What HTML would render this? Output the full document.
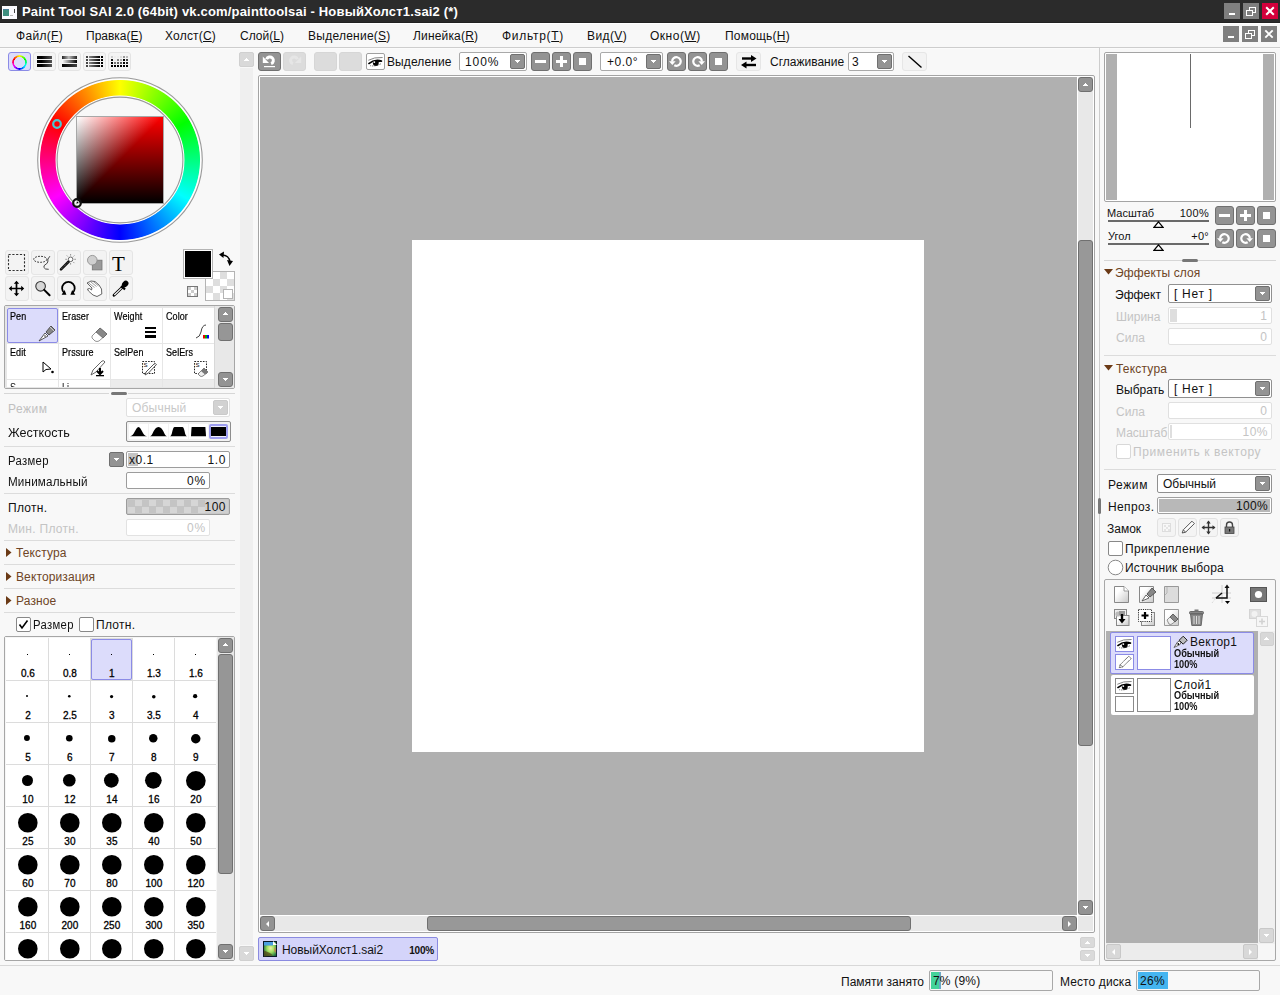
<!DOCTYPE html>
<html><head><meta charset="utf-8">
<style>
*{margin:0;padding:0;box-sizing:border-box}
html,body{width:1280px;height:995px;overflow:hidden;background:#f8f8f8;font-family:"Liberation Sans",sans-serif;color:#000;position:relative}
.a{position:absolute}
.t{position:absolute;white-space:nowrap;line-height:1}
</style></head><body>
<div class="a" style="left:0px;top:0px;width:1280px;height:23px;background:#2b2b2b;"></div>
<div class="a" style="left:0px;top:22px;width:1280px;height:1px;background:#222;"></div>
<div class="a" style="left:0px;top:23px;width:1280px;height:1px;background:#fff;"></div>
<div class="a" style="left:2px;top:6px;width:15px;height:13px;background:#fbfbff;"></div>
<div class="a" style="left:3px;top:9px;width:6px;height:7px;background:#3f8f7f;"></div>
<div class="a" style="left:3px;top:9px;width:6px;height:1px;background:#4a7f9a;"></div>
<div class="a" style="left:14px;top:9px;width:1px;height:4px;background:#444;"></div>
<div class="a" style="left:10px;top:15px;width:3px;height:1px;background:#bbb;"></div>
<div class="t" style="left:22px;top:5px;font-size:13px;color:#fff;font-weight:bold;letter-spacing:0.18px;">Paint Tool SAI 2.0 (64bit) vk.com/painttoolsai - НовыйХолст1.sai2 (*)</div>
<div class="a" style="left:1224px;top:3px;width:16px;height:16px;background:#7f7f7f;"></div>
<div class="a" style="left:1243px;top:3px;width:16px;height:16px;background:#7f7f7f;"></div>
<div class="a" style="left:1262px;top:3px;width:16px;height:16px;background:#d3003c;"></div>
<div class="a" style="left:1229px;top:13px;width:6px;height:2px;background:#fff;"></div>
<svg class="a" style="left:1246px;top:7px;" width="10" height="10" viewBox="0 0 10 10"><rect x="3.5" y="0.5" width="6" height="5" fill="none" stroke="#fff"/><rect x="0.5" y="3.5" width="6" height="5" fill="#7f7f7f" stroke="#fff"/></svg>
<svg class="a" style="left:1265px;top:6px;" width="10" height="10" viewBox="0 0 10 10"><path d="M1.2 1.2 L8.8 8.8 M8.8 1.2 L1.2 8.8" stroke="#fff" stroke-width="2"/></svg>
<div class="t" style="left:16px;top:30px;font-size:12px;color:#111;letter-spacing:0.3px;text-underline-offset:1px">Файл(<u>F</u>)</div>
<div class="t" style="left:86px;top:30px;font-size:12px;color:#111;letter-spacing:0px;text-underline-offset:1px">Правка(<u>E</u>)</div>
<div class="t" style="left:165px;top:30px;font-size:12px;color:#111;letter-spacing:0.2px;text-underline-offset:1px">Холст(<u>C</u>)</div>
<div class="t" style="left:240px;top:30px;font-size:12px;color:#111;letter-spacing:0px;text-underline-offset:1px">Слой(<u>L</u>)</div>
<div class="t" style="left:308px;top:30px;font-size:12px;color:#111;letter-spacing:0.25px;text-underline-offset:1px">Выделение(<u>S</u>)</div>
<div class="t" style="left:413px;top:30px;font-size:12px;color:#111;letter-spacing:0.17px;text-underline-offset:1px">Линейка(<u>R</u>)</div>
<div class="t" style="left:502px;top:30px;font-size:12px;color:#111;letter-spacing:0.7px;text-underline-offset:1px">Фильтр(<u>T</u>)</div>
<div class="t" style="left:587px;top:30px;font-size:12px;color:#111;letter-spacing:0.4px;text-underline-offset:1px">Вид(<u>V</u>)</div>
<div class="t" style="left:650px;top:30px;font-size:12px;color:#111;letter-spacing:0.5px;text-underline-offset:1px">Окно(<u>W</u>)</div>
<div class="t" style="left:725px;top:30px;font-size:12px;color:#111;letter-spacing:0.2px;text-underline-offset:1px">Помощь(<u>H</u>)</div>
<div class="a" style="left:1223px;top:26px;width:16px;height:16px;background:#7f7f7f;"></div>
<div class="a" style="left:1242px;top:26px;width:16px;height:16px;background:#7f7f7f;"></div>
<div class="a" style="left:1261px;top:26px;width:16px;height:16px;background:#7f7f7f;"></div>
<div class="a" style="left:1228px;top:36px;width:6px;height:2px;background:#fff;"></div>
<svg class="a" style="left:1245px;top:30px;" width="10" height="10" viewBox="0 0 10 10"><rect x="3.5" y="0.5" width="6" height="5" fill="none" stroke="#fff"/><rect x="0.5" y="3.5" width="6" height="5" fill="#7f7f7f" stroke="#fff"/></svg>
<svg class="a" style="left:1264px;top:29px;" width="10" height="10" viewBox="0 0 10 10"><path d="M1.3 1.3 L8.7 8.7 M8.7 1.3 L1.3 8.7" stroke="#fff" stroke-width="1.9"/></svg>
<div class="a" style="left:0px;top:47px;width:1280px;height:1px;background:#cdcdcd;"></div>
<div class="a" style="left:0px;top:48px;width:1280px;height:1px;background:#fbfbfb;"></div>
<div class="a" style="left:239px;top:52px;width:15px;height:15px;background:#d9d9d9;border:1px solid #d0d0d0;border-radius:2px;"></div>
<div class="a" style="left:246px;top:58px;width:1px;height:1px;background:#fff;"></div>
<div class="a" style="left:245px;top:59px;width:3px;height:1px;background:#fff;"></div>
<div class="a" style="left:244px;top:60px;width:5px;height:1px;background:#fff;"></div>
<div class="a" style="left:258px;top:52px;width:23px;height:19px;background:#939393;border:1px solid #707070;border-radius:3px;"></div>
<svg class="a" style="left:258px;top:52px;" width="23" height="19" viewBox="0 0 23 19"><path d="M4.8 4.6 V11 H11 Z" fill="#fff"/><path d="M8.6 7.2 A3.5 3.5 0 1 1 13.1 11.7" stroke="#fff" stroke-width="3" fill="none"/><rect x="6" y="14" width="11" height="1.2" fill="#fff"/></svg>
<div class="a" style="left:283px;top:52px;width:23px;height:19px;background:#dcdcdc;border:1px solid #d6d6d6;border-radius:3px;"></div>
<svg class="a" style="left:283px;top:52px;" width="23" height="19" viewBox="0 0 23 19"><g transform="translate(23 0) scale(-1 1)"><path d="M4.8 4.6 V11 H11 Z" fill="#e6e6e6"/><path d="M8.6 7.2 A3.5 3.5 0 1 1 13.1 11.7" stroke="#e6e6e6" stroke-width="3" fill="none"/></g></svg>
<div class="a" style="left:314px;top:52px;width:23px;height:19px;background:#dcdcdc;border:1px solid #d6d6d6;border-radius:3px;"></div>
<div class="a" style="left:339px;top:52px;width:23px;height:19px;background:#dcdcdc;border:1px solid #d6d6d6;border-radius:3px;"></div>
<div class="a" style="left:366px;top:53px;width:19px;height:17px;background:#fff;border:1px solid #a0a0a0;border-radius:2px;"></div>
<svg class="a" style="left:367px;top:56px;" width="18" height="13" viewBox="0 0 18 13"><g transform="translate(1 1)"><path d="M0.3 3.3 Q6 0 14.6 0.5" stroke="#777" stroke-width="0.9" fill="none"/><path d="M0.4 6.8 Q7 1.6 14 4.3" stroke="#000" stroke-width="1.7" fill="none"/><path d="M9 3.2 L14.8 4.3 L9.5 5.4 Z" fill="#000"/><circle cx="7.8" cy="6" r="2.9" fill="#000"/><circle cx="6.3" cy="5.1" r="0.95" fill="#fff"/><path d="M2.3 8.7 Q8 9.7 13.3 6.5" stroke="#444" stroke-width="1" stroke-dasharray="0.8,0.9" fill="none"/></g></svg>
<div class="t" style="left:387px;top:56px;font-size:12px;color:#111;letter-spacing:0.1px;">Выделение</div>
<div class="a" style="left:459px;top:52px;width:68px;height:19px;background:#fff;border:1px solid #a9a9a9;border-radius:2px;"></div>
<div class="t" style="left:465px;top:56px;font-size:12px;color:#111;letter-spacing:0.9px;">100%</div>
<div class="a" style="left:510px;top:54px;width:15px;height:15px;background:#939393;border:1px solid #707070;border-radius:2px;"></div>
<div class="a" style="left:515px;top:60px;width:5px;height:1px;background:#fff;"></div>
<div class="a" style="left:516px;top:61px;width:3px;height:1px;background:#fff;"></div>
<div class="a" style="left:517px;top:62px;width:1px;height:1px;background:#fff;"></div>
<div class="a" style="left:531px;top:52px;width:19px;height:19px;background:#939393;border:1px solid #707070;border-radius:3px;"></div>
<div class="a" style="left:552px;top:52px;width:19px;height:19px;background:#939393;border:1px solid #707070;border-radius:3px;"></div>
<div class="a" style="left:573px;top:52px;width:19px;height:19px;background:#939393;border:1px solid #707070;border-radius:3px;"></div>
<div class="a" style="left:535px;top:60px;width:11px;height:3px;background:#fff;"></div>
<div class="a" style="left:556px;top:60px;width:11px;height:3px;background:#fff;"></div>
<div class="a" style="left:560px;top:56px;width:3px;height:11px;background:#fff;"></div>
<div class="a" style="left:579px;top:58px;width:7px;height:7px;background:#fff;"></div>
<div class="a" style="left:600px;top:52px;width:63px;height:19px;background:#fff;border:1px solid #a9a9a9;border-radius:2px;"></div>
<div class="t" style="left:607px;top:56px;font-size:12px;color:#111;letter-spacing:0.5px;">+0.0°</div>
<div class="a" style="left:646px;top:54px;width:15px;height:15px;background:#939393;border:1px solid #707070;border-radius:2px;"></div>
<div class="a" style="left:651px;top:60px;width:5px;height:1px;background:#fff;"></div>
<div class="a" style="left:652px;top:61px;width:3px;height:1px;background:#fff;"></div>
<div class="a" style="left:653px;top:62px;width:1px;height:1px;background:#fff;"></div>
<div class="a" style="left:667px;top:52px;width:19px;height:19px;background:#939393;border:1px solid #707070;border-radius:3px;"></div>
<div class="a" style="left:688px;top:52px;width:19px;height:19px;background:#939393;border:1px solid #707070;border-radius:3px;"></div>
<div class="a" style="left:709px;top:52px;width:19px;height:19px;background:#939393;border:1px solid #707070;border-radius:3px;"></div>
<svg class="a" style="left:667px;top:52px;" width="19" height="19" viewBox="0 0 19 19"><path d="M5.15 9.45 A4.3 4.3 0 1 1 7.3 13.2" stroke="#fff" stroke-width="2.2" fill="none"/><path d="M2 9.2 L8.6 9.2 L5.3 13 Z" fill="#fff"/></svg>
<svg class="a" style="left:688px;top:52px;" width="19" height="19" viewBox="0 0 19 19"><g transform="translate(19 0) scale(-1 1)"><path d="M5.15 9.45 A4.3 4.3 0 1 1 7.3 13.2" stroke="#fff" stroke-width="2.2" fill="none"/><path d="M2 9.2 L8.6 9.2 L5.3 13 Z" fill="#fff"/></g></svg>
<div class="a" style="left:715px;top:58px;width:7px;height:7px;background:#fff;"></div>
<div class="a" style="left:736px;top:52px;width:25px;height:19px;background:#f3f3f3;border:1px solid #e6e6e6;border-radius:3px;"></div>
<svg class="a" style="left:740px;top:55px;" width="18" height="14" viewBox="0 0 18 14"><path d="M2 3.5 H13" stroke="#000" stroke-width="2.4"/><path d="M11 0 L16.5 3.5 L11 7 Z" fill="#000"/><path d="M5 10 H16" stroke="#000" stroke-width="2.4"/><path d="M6.5 6.5 L1 10 L6.5 13.5 Z" fill="#000"/></svg>
<div class="t" style="left:770px;top:56px;font-size:12px;color:#111;">Сглаживание</div>
<div class="a" style="left:848px;top:52px;width:46px;height:19px;background:#fff;border:1px solid #a9a9a9;border-radius:2px;"></div>
<div class="t" style="left:852px;top:56px;font-size:12px;color:#111;">3</div>
<div class="a" style="left:877px;top:54px;width:15px;height:15px;background:#939393;border:1px solid #707070;border-radius:2px;"></div>
<div class="a" style="left:882px;top:60px;width:5px;height:1px;background:#fff;"></div>
<div class="a" style="left:883px;top:61px;width:3px;height:1px;background:#fff;"></div>
<div class="a" style="left:884px;top:62px;width:1px;height:1px;background:#fff;"></div>
<div class="a" style="left:902px;top:52px;width:25px;height:19px;background:#f3f3f3;border:1px solid #e6e6e6;border-radius:3px;"></div>
<svg class="a" style="left:906px;top:54px;" width="17" height="15" viewBox="0 0 17 15"><path d="M2.5 2 L15.5 13.5" stroke="#000" stroke-width="1.4"/></svg>
<div class="a" style="left:8px;top:52px;width:23px;height:19px;background:#dcdcfb;border:1px solid #8b8be6;border-radius:3px;"></div>
<svg class="a" style="left:12px;top:54px;" width="15" height="15" viewBox="0 0 15 15"><defs><linearGradient id="rg" x1="0" y1="0" x2="1" y2="1"><stop offset="0" stop-color="#f44"/><stop offset="0.5" stop-color="#ee0"/><stop offset="1" stop-color="#44f"/></linearGradient></defs></svg>
<div class="a" style="left:12px;top:55px;width:15px;height:15px;border-radius:50%;background:conic-gradient(#ff0,#0f0,#0ff,#00f,#f0f,#f00,#ff0);-webkit-mask:radial-gradient(circle closest-side, transparent 5.3px, #000 5.8px, #000 7.5px, transparent 8px)"></div>
<div class="a" style="left:33px;top:52px;width:23px;height:19px;background:#f4f4f4;border:1px solid #e4e4e4;border-radius:3px;"></div>
<div class="a" style="left:58px;top:52px;width:23px;height:19px;background:#f4f4f4;border:1px solid #e4e4e4;border-radius:3px;"></div>
<div class="a" style="left:83px;top:52px;width:23px;height:19px;background:#f4f4f4;border:1px solid #e4e4e4;border-radius:3px;"></div>
<div class="a" style="left:108px;top:52px;width:23px;height:19px;background:#f4f4f4;border:1px solid #e4e4e4;border-radius:3px;"></div>
<div class="a" style="left:37px;top:56px;width:15px;height:3px;background:linear-gradient(to right,#000 30%,#555)"></div>
<div class="a" style="left:37px;top:60px;width:15px;height:3px;background:linear-gradient(to right,#000 30%,#555)"></div>
<div class="a" style="left:37px;top:64px;width:15px;height:3px;background:linear-gradient(to right,#000 30%,#555)"></div>
<div class="a" style="left:62px;top:56px;width:15px;height:3px;background:linear-gradient(to right,#222,#bbb 45%,#222)"></div>
<div class="a" style="left:62px;top:60px;width:15px;height:3px;background:linear-gradient(to right,#fff,#000)"></div>
<div class="a" style="left:62px;top:64px;width:15px;height:3px;background:linear-gradient(to right,#000,#444)"></div>
<div class="a" style="left:86px;top:56px;width:2px;height:2px;background:#444;"></div>
<div class="a" style="left:89px;top:56px;width:11px;height:2px;background:linear-gradient(to right,#888,#000)"></div>
<div class="a" style="left:101px;top:56px;width:2px;height:2px;background:#000;"></div>
<div class="a" style="left:86px;top:59px;width:2px;height:2px;background:#444;"></div>
<div class="a" style="left:89px;top:59px;width:11px;height:2px;background:linear-gradient(to right,#888,#000)"></div>
<div class="a" style="left:101px;top:59px;width:2px;height:2px;background:#000;"></div>
<div class="a" style="left:86px;top:62px;width:2px;height:2px;background:#444;"></div>
<div class="a" style="left:89px;top:62px;width:11px;height:2px;background:linear-gradient(to right,#888,#000)"></div>
<div class="a" style="left:101px;top:62px;width:2px;height:2px;background:#000;"></div>
<div class="a" style="left:86px;top:65px;width:2px;height:2px;background:#444;"></div>
<div class="a" style="left:89px;top:65px;width:11px;height:2px;background:linear-gradient(to right,#888,#000)"></div>
<div class="a" style="left:101px;top:65px;width:2px;height:2px;background:#000;"></div>
<div class="a" style="left:111px;top:56px;width:2px;height:2px;background:#cccccc;"></div>
<div class="a" style="left:114px;top:56px;width:2px;height:2px;background:#eeeeee;"></div>
<div class="a" style="left:117px;top:56px;width:2px;height:2px;background:#eeeeee;"></div>
<div class="a" style="left:120px;top:56px;width:2px;height:2px;background:#dddddd;"></div>
<div class="a" style="left:123px;top:56px;width:2px;height:2px;background:#999999;"></div>
<div class="a" style="left:126px;top:56px;width:2px;height:2px;background:#bbbbbb;"></div>
<div class="a" style="left:111px;top:59px;width:2px;height:2px;background:#111111;"></div>
<div class="a" style="left:114px;top:59px;width:2px;height:2px;background:#eeeeee;"></div>
<div class="a" style="left:117px;top:59px;width:2px;height:2px;background:#888888;"></div>
<div class="a" style="left:120px;top:59px;width:2px;height:2px;background:#aaaaaa;"></div>
<div class="a" style="left:123px;top:59px;width:2px;height:2px;background:#000000;"></div>
<div class="a" style="left:126px;top:59px;width:2px;height:2px;background:#444444;"></div>
<div class="a" style="left:111px;top:62px;width:2px;height:2px;background:#000000;"></div>
<div class="a" style="left:114px;top:62px;width:2px;height:2px;background:#777777;"></div>
<div class="a" style="left:117px;top:62px;width:2px;height:2px;background:#666666;"></div>
<div class="a" style="left:120px;top:62px;width:2px;height:2px;background:#555555;"></div>
<div class="a" style="left:123px;top:62px;width:2px;height:2px;background:#000000;"></div>
<div class="a" style="left:126px;top:62px;width:2px;height:2px;background:#222222;"></div>
<div class="a" style="left:111px;top:65px;width:2px;height:2px;background:#000000;"></div>
<div class="a" style="left:114px;top:65px;width:2px;height:2px;background:#000000;"></div>
<div class="a" style="left:117px;top:65px;width:2px;height:2px;background:#000000;"></div>
<div class="a" style="left:120px;top:65px;width:2px;height:2px;background:#000000;"></div>
<div class="a" style="left:123px;top:65px;width:2px;height:2px;background:#000000;"></div>
<div class="a" style="left:126px;top:65px;width:2px;height:2px;background:#000000;"></div>
<div class="a" style="left:38px;top:78px;width:164px;height:164px;border-radius:50%;background:conic-gradient(from 0deg, #ff0 0deg, #0f0 60deg, #0ff 120deg, #00f 180deg, #f0f 240deg, #f00 300deg, #ff0 360deg);-webkit-mask:radial-gradient(circle closest-side, transparent 63.5px, #000 64.5px, #000 79.5px, transparent 80.5px);mask:radial-gradient(circle closest-side, transparent 63.5px, #000 64.5px, #000 79.5px, transparent 80.5px)"></div>
<svg class="a" style="left:35px;top:75px;" width="170" height="170" viewBox="0 0 170 170"><circle cx="85" cy="85" r="81" fill="none" stroke="#fff" stroke-width="1.2"/><circle cx="85" cy="85" r="63.9" fill="none" stroke="#fff" stroke-width="1.1"/><circle cx="85" cy="85" r="82.3" fill="none" stroke="#9a9a9a" stroke-width="1.1"/><circle cx="85" cy="85" r="62.9" fill="none" stroke="#9a9a9a" stroke-width="1.1"/></svg>
<div class="a" style="left:76px;top:116px;width:88px;height:88px;background:#fff;border:1px solid #a8a8a8;"></div>
<div class="a" style="left:77px;top:117px;width:86px;height:86px;background:linear-gradient(to bottom right, #0ff, #000 50%), linear-gradient(to bottom, #f00, #000);background-blend-mode:screen"></div>
<svg class="a" style="left:51px;top:118px;" width="12" height="12" viewBox="0 0 12 12"><circle cx="6" cy="6" r="3.8" fill="none" stroke="#4cc8d0" stroke-width="2.2"/></svg>
<svg class="a" style="left:71px;top:197px;" width="12" height="12" viewBox="0 0 12 12"><circle cx="6" cy="6" r="3.8" fill="none" stroke="#111" stroke-width="2.2"/><circle cx="6" cy="6" r="2" fill="none" stroke="#fff" stroke-width="1"/></svg>
<div class="a" style="left:5px;top:250px;width:24px;height:25px;background:#f3f3f3;border:1px solid #e5e5e5;border-radius:3px;"></div>
<div class="a" style="left:31px;top:250px;width:24px;height:25px;background:#f3f3f3;border:1px solid #e5e5e5;border-radius:3px;"></div>
<div class="a" style="left:57px;top:250px;width:24px;height:25px;background:#f3f3f3;border:1px solid #e5e5e5;border-radius:3px;"></div>
<div class="a" style="left:83px;top:250px;width:24px;height:25px;background:#f3f3f3;border:1px solid #e5e5e5;border-radius:3px;"></div>
<div class="a" style="left:109px;top:250px;width:24px;height:25px;background:#f3f3f3;border:1px solid #e5e5e5;border-radius:3px;"></div>
<div class="a" style="left:5px;top:276px;width:24px;height:25px;background:#f3f3f3;border:1px solid #e5e5e5;border-radius:3px;"></div>
<div class="a" style="left:31px;top:276px;width:24px;height:25px;background:#f3f3f3;border:1px solid #e5e5e5;border-radius:3px;"></div>
<div class="a" style="left:57px;top:276px;width:24px;height:25px;background:#f3f3f3;border:1px solid #e5e5e5;border-radius:3px;"></div>
<div class="a" style="left:83px;top:276px;width:24px;height:25px;background:#f3f3f3;border:1px solid #e5e5e5;border-radius:3px;"></div>
<div class="a" style="left:109px;top:276px;width:24px;height:25px;background:#f3f3f3;border:1px solid #e5e5e5;border-radius:3px;"></div>
<svg class="a" style="left:5px;top:250px;" width="24" height="25" viewBox="0 0 24 25"><rect x="3.5" y="4.5" width="16" height="16" fill="none" stroke="#333" stroke-width="1.1" stroke-dasharray="2.2,1.6"/></svg>
<svg class="a" style="left:31px;top:250px;" width="24" height="25" viewBox="0 0 24 25"><ellipse cx="9.3" cy="9.3" rx="6.6" ry="3" fill="none" stroke="#333" stroke-width="1" stroke-dasharray="1.8,1.2"/><path d="M18.9 6.2 Q16 9 16.8 12 Q16 14 13.5 15.2 Q11.5 17.5 14.6 19 L17.7 19.3" fill="none" stroke="#333" stroke-width="0.9"/></svg>
<svg class="a" style="left:57px;top:250px;" width="24" height="25" viewBox="0 0 24 25"><path d="M4 19.3 L11.8 11.5" stroke="#111" stroke-width="2.6" stroke-linecap="round"/><path d="M4.5 18.8 L11.5 11.8" stroke="#aaa" stroke-width="0.7" stroke-dasharray="1,1"/><circle cx="13.6" cy="9.3" r="2.3" fill="#fff" stroke="#555" stroke-width="0.9"/><path d="M13.6 4 V5.6 M13.6 13 V14.6 M8.3 9.3 H9.9 M17.3 9.3 H18.9 M9.8 5.5 L10.8 6.5 M17.4 5.5 L16.4 6.5 M17.4 13.1 L16.4 12.1" stroke="#888" stroke-width="0.9"/></svg>
<svg class="a" style="left:83px;top:250px;" width="24" height="25" viewBox="0 0 24 25"><rect x="9.3" y="10.2" width="9.7" height="9.7" fill="#9a9a9a" stroke="#777" stroke-width="0.8"/><circle cx="9.3" cy="10.2" r="4.8" fill="#cfcfcf" stroke="#888" stroke-width="0.8"/></svg>
<div class="t" style="left:112px;top:254px;font-family:'Liberation Serif';font-size:21px;color:#000">T</div>
<svg class="a" style="left:5px;top:276px;" width="24" height="25" viewBox="0 0 24 25"><path d="M11.5 6.5 V18.5 M5.5 12.5 H17.5" stroke="#000" stroke-width="1.7"/><path d="M11.5 4.8 L8.8 7.8 H14.2 Z M11.5 20.2 L8.8 17.2 H14.2 Z M3.8 12.5 L6.8 9.8 V15.2 Z M19.2 12.5 L16.2 9.8 V15.2 Z" fill="#000"/></svg>
<svg class="a" style="left:31px;top:276px;" width="24" height="25" viewBox="0 0 24 25"><circle cx="9.6" cy="10.3" r="4.8" fill="#d6d6d6" stroke="#333" stroke-width="1.1"/><path d="M13.2 13.9 L18.6 19.3" stroke="#000" stroke-width="2" stroke-linecap="round"/></svg>
<svg class="a" style="left:57px;top:276px;" width="24" height="25" viewBox="0 0 24 25"><path d="M7.3 17 A6.3 6.3 0 1 1 15.5 17" fill="none" stroke="#000" stroke-width="1.8"/><path d="M4.6 18.8 H9.4 L7.6 14 Z M13.4 18.8 H18.2 L15.2 14 Z" fill="#000"/></svg>
<svg class="a" style="left:83px;top:276px;" width="24" height="25" viewBox="0 0 24 25"><path d="M4 7 L8 5 L12 5.5 L16 9 L18.5 13 L18.8 18 L14 20.5 L10 19 L5.5 15 L4.5 13 L6.5 12.5 L8.5 14 L9 12 Z" fill="#fff" stroke="#555" stroke-width="0.9" stroke-linejoin="round"/><path d="M5 6.5 L11.5 11.5 M7.3 5.5 L13.5 10.5 M10 5.2 L15.3 9.8" stroke="#777" stroke-width="0.7"/></svg>
<svg class="a" style="left:109px;top:276px;" width="24" height="25" viewBox="0 0 24 25"><path d="M5 19.3 L12.8 11.8" stroke="#000" stroke-width="2.8" stroke-linecap="round"/><path d="M5.3 19 L12.5 12.1" stroke="#fff" stroke-width="1.2"/><path d="M12.3 9.8 L16 13.5" stroke="#000" stroke-width="2.2"/><ellipse cx="16.2" cy="8" rx="2.8" ry="3.6" transform="rotate(45 16.2 8)" fill="#000"/></svg>
<div class="a" style="left:205px;top:271px;width:30px;height:30px;background:#fff;border:1px solid #b4b4b4;"></div>
<div class="a" style="left:206px;top:272px;width:7px;height:7px;background:#dedede;"></div>
<div class="a" style="left:220px;top:272px;width:7px;height:7px;background:#dedede;"></div>
<div class="a" style="left:213px;top:279px;width:7px;height:7px;background:#dedede;"></div>
<div class="a" style="left:227px;top:279px;width:7px;height:7px;background:#dedede;"></div>
<div class="a" style="left:206px;top:286px;width:7px;height:7px;background:#dedede;"></div>
<div class="a" style="left:220px;top:286px;width:7px;height:7px;background:#dedede;"></div>
<div class="a" style="left:213px;top:293px;width:7px;height:7px;background:#dedede;"></div>
<div class="a" style="left:227px;top:293px;width:7px;height:7px;background:#dedede;"></div>
<div class="a" style="left:223px;top:289px;width:10px;height:10px;background:#fff;border:1px solid #b4b4b4;"></div>
<div class="a" style="left:183px;top:249px;width:30px;height:30px;background:#fff;border:1px solid #b4b4b4;"></div>
<div class="a" style="left:185px;top:251px;width:26px;height:26px;background:#000;"></div>
<svg class="a" style="left:218px;top:251px;" width="16" height="16" viewBox="0 0 16 16"><path d="M4 4 Q11 4 12 11" fill="none" stroke="#000" stroke-width="1.3"/><path d="M1 3.5 L6 0.5 L5.5 7 Z" fill="#000"/><path d="M9 9 L15 10 L11.5 15 Z" fill="#000"/></svg>
<div class="a" style="left:187px;top:286px;width:11px;height:11px;background:#fff;border:1px solid #777;"></div>
<div class="a" style="left:188px;top:287px;width:3px;height:3px;background:#ccc;"></div>
<div class="a" style="left:194px;top:287px;width:3px;height:3px;background:#ccc;"></div>
<div class="a" style="left:191px;top:290px;width:3px;height:3px;background:#ccc;"></div>
<div class="a" style="left:188px;top:293px;width:3px;height:3px;background:#ccc;"></div>
<div class="a" style="left:194px;top:293px;width:3px;height:3px;background:#ccc;"></div>
<div class="a" style="left:4px;top:305px;width:231px;height:84px;background:#f0f0f0;border:1px solid #a6a6a6;border-radius:2px;"></div>
<div class="a" style="left:5px;top:306px;width:210px;height:82px;background:#e6e6e6;"></div>
<div class="a" style="left:7px;top:308px;width:51px;height:35px;background:#dcdcfb;border:1px solid #8b8be6;border-radius:2px;"></div>
<div class="t" style="left:10px;top:312px;font-size:10px;color:#000;letter-spacing:0.1px;transform:scaleX(0.9);transform-origin:0 0;-webkit-text-stroke:0.2px #000">Pen</div>
<div class="a" style="left:59px;top:308px;width:51px;height:35px;background:#fff;"></div>
<div class="t" style="left:62px;top:312px;font-size:10px;color:#000;letter-spacing:0.1px;transform:scaleX(0.9);transform-origin:0 0;-webkit-text-stroke:0.2px #000">Eraser</div>
<div class="a" style="left:111px;top:308px;width:51px;height:35px;background:#fff;"></div>
<div class="t" style="left:114px;top:312px;font-size:10px;color:#000;letter-spacing:0.1px;transform:scaleX(0.9);transform-origin:0 0;-webkit-text-stroke:0.2px #000">Weight</div>
<div class="a" style="left:163px;top:308px;width:51px;height:35px;background:#fff;"></div>
<div class="t" style="left:166px;top:312px;font-size:10px;color:#000;letter-spacing:0.1px;transform:scaleX(0.9);transform-origin:0 0;-webkit-text-stroke:0.2px #000">Color</div>
<div class="a" style="left:7px;top:344px;width:51px;height:35px;background:#fff;"></div>
<div class="t" style="left:10px;top:348px;font-size:10px;color:#000;letter-spacing:0.1px;transform:scaleX(0.9);transform-origin:0 0;-webkit-text-stroke:0.2px #000">Edit</div>
<div class="a" style="left:59px;top:344px;width:51px;height:35px;background:#fff;"></div>
<div class="t" style="left:62px;top:348px;font-size:10px;color:#000;letter-spacing:0.1px;transform:scaleX(0.9);transform-origin:0 0;-webkit-text-stroke:0.2px #000">Prssure</div>
<div class="a" style="left:111px;top:344px;width:51px;height:35px;background:#fff;"></div>
<div class="t" style="left:114px;top:348px;font-size:10px;color:#000;letter-spacing:0.1px;transform:scaleX(0.9);transform-origin:0 0;-webkit-text-stroke:0.2px #000">SelPen</div>
<div class="a" style="left:163px;top:344px;width:51px;height:35px;background:#fff;"></div>
<div class="t" style="left:166px;top:348px;font-size:10px;color:#000;letter-spacing:0.1px;transform:scaleX(0.9);transform-origin:0 0;-webkit-text-stroke:0.2px #000">SelErs</div>
<div class="a" style="left:7px;top:380px;width:51px;height:7px;background:#fff;"></div>
<div class="a" style="left:59px;top:380px;width:51px;height:7px;background:#fff;"></div>
<div class="a" style="left:111px;top:380px;width:51px;height:7px;background:#ececec;"></div>
<div class="a" style="left:163px;top:380px;width:51px;height:7px;background:#ececec;"></div>
<div class="t" style="left:10px;top:383px;font-size:10px;color:#000;transform:scaleX(0.9);transform-origin:0 0;clip-path:inset(0 0 6px 0)">S</div>
<div class="t" style="left:62px;top:383px;font-size:10px;color:#000;transform:scaleX(0.9);transform-origin:0 0;clip-path:inset(0 0 6px 0)">Li</div>
<svg class="a" style="left:37px;top:322px;" width="20" height="20" viewBox="0 0 20 20"><path d="M2 19 L8 11 L11 14 Z" fill="#fff" stroke="#444" stroke-width="0.9"/><path d="M9 10 L14 4 L18 8 L12 13 Z" fill="#888" stroke="#444" stroke-width="0.9"/><path d="M13 5 L17 9" stroke="#ccc" stroke-width="1"/><circle cx="8" cy="14" r="0.8" fill="#333"/></svg>
<svg class="a" style="left:89px;top:322px;" width="20" height="20" viewBox="0 0 20 20"><path d="M3 14 L11 6 L18 12 L10 19 Q8 20 6 19 L3 16 Z" fill="#fff" stroke="#888" stroke-width="0.9"/><path d="M7 10 L11 6 L18 12 L14 16 Z" fill="#888" stroke="#666" stroke-width="0.8"/></svg>
<div class="a" style="left:145px;top:327px;width:11px;height:2px;background:#000;"></div>
<div class="a" style="left:145px;top:331px;width:11px;height:2px;background:#000;"></div>
<div class="a" style="left:145px;top:335px;width:11px;height:3px;background:#000;"></div>
<svg class="a" style="left:195px;top:323px;" width="18" height="18" viewBox="0 0 18 18"><path d="M1 15 Q5 14 6 9 Q7 2 11 2" fill="none" stroke="#444" stroke-width="1"/><rect x="8" y="12" width="2" height="3.5" fill="#e00"/><rect x="10" y="12" width="2" height="3.5" fill="#0a0"/><rect x="12" y="12" width="2" height="3.5" fill="#00e"/></svg>
<svg class="a" style="left:41px;top:360px;" width="16" height="16" viewBox="0 0 16 16"><path d="M2 2 L2 12 L5 9.5 L10 9 Z" fill="#fff" stroke="#000" stroke-width="1"/><circle cx="11.5" cy="12" r="1.3" fill="#000"/></svg>
<svg class="a" style="left:89px;top:359px;" width="20" height="20" viewBox="0 0 20 20"><path d="M2 16 L4 11 L13 2 Q15 1 16 3 L7 13 Z" fill="#fff" stroke="#555" stroke-width="0.9"/><path d="M11 9 V14 M8 12 L11 15 L14 12" stroke="#000" stroke-width="2" fill="none"/><rect x="7" y="16" width="8" height="1.3" fill="#000"/></svg>
<svg class="a" style="left:140px;top:359px;" width="20" height="20" viewBox="0 0 20 20"><rect x="2.5" y="2.5" width="12" height="12" fill="none" stroke="#222" stroke-width="1" stroke-dasharray="1.6,1.2"/><text x="3.5" y="8" font-size="6" font-family="Liberation Sans" fill="#000">S</text><path d="M5 16 L6 13 L14 5 Q15.5 4 16.5 5.5 L8.5 14 Z" fill="#fff" stroke="#444" stroke-width="0.9"/></svg>
<svg class="a" style="left:192px;top:359px;" width="20" height="20" viewBox="0 0 20 20"><rect x="2.5" y="2.5" width="12" height="12" fill="none" stroke="#222" stroke-width="1" stroke-dasharray="1.6,1.2"/><text x="3.5" y="8" font-size="6" font-family="Liberation Sans" fill="#000">S</text><path d="M6 15 L12 9 L16 13 L11 17 Q9 18 8 17 Z" fill="#eee" stroke="#666" stroke-width="0.8"/><path d="M9 12 L12 9 L16 13 L13 15.5 Z" fill="#777"/></svg>
<div class="a" style="left:215px;top:306px;width:19px;height:82px;background:#e8e8e8;"></div>
<div class="a" style="left:214px;top:306px;width:1px;height:82px;background:#d8d8d8;"></div>
<div class="a" style="left:218px;top:307px;width:15px;height:15px;background:#939393;border:1px solid #707070;border-radius:3px;"></div>
<div class="a" style="left:225px;top:312px;width:1px;height:1px;background:#fff;"></div>
<div class="a" style="left:224px;top:313px;width:3px;height:1px;background:#fff;"></div>
<div class="a" style="left:223px;top:314px;width:5px;height:1px;background:#fff;"></div>
<div class="a" style="left:218px;top:323px;width:15px;height:18px;background:#969696;border:1px solid #707070;border-radius:3px;"></div>
<div class="a" style="left:218px;top:372px;width:15px;height:15px;background:#939393;border:1px solid #707070;border-radius:3px;"></div>
<div class="a" style="left:223px;top:378px;width:5px;height:1px;background:#fff;"></div>
<div class="a" style="left:224px;top:379px;width:3px;height:1px;background:#fff;"></div>
<div class="a" style="left:225px;top:380px;width:1px;height:1px;background:#fff;"></div>
<div class="a" style="left:4px;top:393px;width:105px;height:1px;background:#d6d6d6;"></div>
<div class="a" style="left:128px;top:393px;width:107px;height:1px;background:#d6d6d6;"></div>
<div class="a" style="left:111px;top:392px;width:16px;height:3px;background:#777;border-radius:2px;"></div>
<div class="t" style="left:8px;top:403px;font-size:12px;color:#c0c0c0;letter-spacing:0.5px;">Режим</div>
<div class="a" style="left:126px;top:398px;width:104px;height:19px;background:#fff;border:1px solid #e0e0e0;border-radius:2px;"></div>
<div class="t" style="left:132px;top:402px;font-size:12px;color:#c8c8c8;letter-spacing:0.2px;">Обычный</div>
<div class="a" style="left:213px;top:400px;width:15px;height:15px;background:#d2d2d2;border:1px solid #cacaca;border-radius:2px;"></div>
<div class="a" style="left:218px;top:406px;width:5px;height:1px;background:#fff;"></div>
<div class="a" style="left:219px;top:407px;width:3px;height:1px;background:#fff;"></div>
<div class="a" style="left:220px;top:408px;width:1px;height:1px;background:#fff;"></div>
<div class="t" style="left:8px;top:427px;font-size:12px;color:#111;transform:scaleX(1.05);transform-origin:0 0;">Жесткость</div>
<div class="a" style="left:126px;top:421px;width:105px;height:21px;background:#f2f2f2;border:1px solid #8e8e8e;border-radius:2px;"></div>
<div class="a" style="left:129px;top:424px;width:19px;height:15px;background:#fff;"></div>
<svg class="a" style="left:129px;top:424px;" width="19" height="15" viewBox="0 0 19 15"><path d="M1 12.2 C5.5 12.2 6.5 3 9.5 3 C12.5 3 13.5 12.2 18 12.2 Z" fill="#000"/></svg>
<div class="a" style="left:149px;top:424px;width:19px;height:15px;background:#fff;"></div>
<svg class="a" style="left:149px;top:424px;" width="19" height="15" viewBox="0 0 19 15"><path d="M1 12.2 C4 12.2 4.5 3 9.5 3 C14.5 3 15 12.2 18 12.2 Z" fill="#000"/></svg>
<div class="a" style="left:169px;top:424px;width:19px;height:15px;background:#fff;"></div>
<svg class="a" style="left:169px;top:424px;" width="19" height="15" viewBox="0 0 19 15"><path d="M1 12.2 C3.5 12.2 3 3.5 5.5 3 L13.5 3 C16 3.5 15.5 12.2 18 12.2 Z" fill="#000"/></svg>
<div class="a" style="left:189px;top:424px;width:19px;height:15px;background:#fff;"></div>
<svg class="a" style="left:189px;top:424px;" width="19" height="15" viewBox="0 0 19 15"><path d="M2 12.2 L2.6 3 L16.4 3 L17 12.2 Z" fill="#000"/></svg>
<div class="a" style="left:209px;top:424px;width:19px;height:15px;background:#eeeefc;border:2px solid #9d9df0;border-radius:2px;"></div>
<div class="a" style="left:211px;top:427px;width:15px;height:9px;background:#000;"></div>
<div class="a" style="left:4px;top:446px;width:231px;height:1px;background:#dcdcdc;"></div>
<div class="t" style="left:8px;top:455px;font-size:12px;color:#111;letter-spacing:0.35px;transform:scaleX(0.94);transform-origin:0 0;">Размер</div>
<div class="a" style="left:109px;top:452px;width:15px;height:15px;background:#939393;border:1px solid #707070;border-radius:2px;"></div>
<div class="a" style="left:114px;top:458px;width:5px;height:1px;background:#fff;"></div>
<div class="a" style="left:115px;top:459px;width:3px;height:1px;background:#fff;"></div>
<div class="a" style="left:116px;top:460px;width:1px;height:1px;background:#fff;"></div>
<div class="a" style="left:126px;top:451px;width:104px;height:17px;background:#fff;border:1px solid #9c9c9c;border-radius:2px;"></div>
<div class="a" style="left:128px;top:453px;width:10px;height:13px;background:#c4c4c4;"></div>
<div class="t" style="left:129px;top:454px;font-size:12px;color:#111;letter-spacing:0.5px;">x0.1</div>
<div class="t" style="left:-74px;width:300px;text-align:right;top:454px;font-size:12px;color:#111;letter-spacing:0.6px;">1.0</div>
<div class="t" style="left:8px;top:476px;font-size:12px;color:#111;letter-spacing:0.18px;transform:scaleX(0.97);transform-origin:0 0;">Минимальный</div>
<div class="a" style="left:126px;top:472px;width:84px;height:17px;background:#fff;border:1px solid #9c9c9c;border-radius:2px;"></div>
<div class="t" style="left:-94px;width:300px;text-align:right;top:475px;font-size:12px;color:#111;letter-spacing:0.8px;">0%</div>
<div class="a" style="left:4px;top:493px;width:231px;height:1px;background:#dcdcdc;"></div>
<div class="t" style="left:8px;top:502px;font-size:12px;color:#111;letter-spacing:0.3px;">Плотн.</div>
<div class="a" style="left:126px;top:498px;width:104px;height:17px;background:#c8c8c8;border:1px solid #9c9c9c;border-radius:2px;"></div>
<div class="a" style="left:128px;top:500px;width:100px;height:13px;background-color:#d4d4d4;background-image:conic-gradient(#d6d6d6 25%,#c4c4c4 0 50%,#d6d6d6 0 75%,#c4c4c4 0);background-size:14px 13px"></div>
<div class="a" style="left:205px;top:500px;width:23px;height:13px;background:#d0d0d0;"></div>
<div class="t" style="left:-74px;width:300px;text-align:right;top:501px;font-size:12px;color:#111;letter-spacing:0.5px;">100</div>
<div class="t" style="left:8px;top:523px;font-size:12px;color:#c4c4c4;letter-spacing:0.3px;">Мин. Плотн.</div>
<div class="a" style="left:126px;top:519px;width:84px;height:17px;background:#fff;border:1px solid #e2e2e2;border-radius:2px;"></div>
<div class="t" style="left:-94px;width:300px;text-align:right;top:522px;font-size:12px;color:#c4c4c4;letter-spacing:0.8px;">0%</div>
<div class="a" style="left:4px;top:540px;width:231px;height:1px;background:#dcdcdc;"></div>
<svg class="a" style="left:6px;top:548px;" width="6" height="10" viewBox="0 0 6 10"><path d="M0 0 L5.5 4.5 L0 9 Z" fill="#6b3a16"/></svg>
<div class="t" style="left:16px;top:547px;font-size:12px;color:#6e4526;letter-spacing:0.12px;">Текстура</div>
<svg class="a" style="left:6px;top:572px;" width="6" height="10" viewBox="0 0 6 10"><path d="M0 0 L5.5 4.5 L0 9 Z" fill="#6b3a16"/></svg>
<div class="t" style="left:16px;top:571px;font-size:12px;color:#6e4526;letter-spacing:0.12px;">Векторизация</div>
<svg class="a" style="left:6px;top:596px;" width="6" height="10" viewBox="0 0 6 10"><path d="M0 0 L5.5 4.5 L0 9 Z" fill="#6b3a16"/></svg>
<div class="t" style="left:16px;top:595px;font-size:12px;color:#6e4526;letter-spacing:0.12px;">Разное</div>
<div class="a" style="left:4px;top:564px;width:231px;height:1px;background:#dcdcdc;"></div>
<div class="a" style="left:4px;top:588px;width:231px;height:1px;background:#dcdcdc;"></div>
<div class="a" style="left:4px;top:612px;width:231px;height:1px;background:#dcdcdc;"></div>
<div class="a" style="left:16px;top:617px;width:15px;height:15px;background:#fff;border:1px solid #888;border-radius:2px;"></div>
<svg class="a" style="left:17px;top:618px;" width="13" height="13" viewBox="0 0 13 13"><path d="M2.5 6.5 L5 10 L10.5 2.5" fill="none" stroke="#000" stroke-width="1.6"/></svg>
<div class="t" style="left:33px;top:619px;font-size:12px;color:#111;letter-spacing:0.35px;transform:scaleX(0.94);transform-origin:0 0;">Размер</div>
<div class="a" style="left:79px;top:617px;width:15px;height:15px;background:#fff;border:1px solid #888;border-radius:2px;"></div>
<div class="t" style="left:96px;top:619px;font-size:12px;color:#111;letter-spacing:0.3px;">Плотн.</div>
<div class="a" style="left:4px;top:636px;width:231px;height:325px;background:#f0f0f0;border:1px solid #a6a6a6;border-radius:2px;"></div>
<div class="a" style="left:5px;top:637px;width:212px;height:323px;background:#f6f6f6;"></div>
<div class="a" style="left:6px;top:638px;width:210px;height:322px;background:#dcdcdc;"></div>
<div class="a" style="left:6px;top:638px;width:42px;height:42px;background:#fff;"></div>
<div class="a" style="left:27px;top:654px;width:1px;height:1px;background:#000;"></div>
<div class="t" style="left:-2.1000000000000014px;width:60px;text-align:center;top:669px;font-size:10px;color:#000;-webkit-text-stroke:0.3px #000">0.6</div>
<div class="a" style="left:49px;top:638px;width:41px;height:42px;background:#fff;"></div>
<div class="a" style="left:69px;top:654px;width:1px;height:1px;background:#000;"></div>
<div class="t" style="left:39.900000000000006px;width:60px;text-align:center;top:669px;font-size:10px;color:#000;-webkit-text-stroke:0.3px #000">0.8</div>
<div class="a" style="left:91px;top:639px;width:41px;height:41px;background:#dcdcfb;border:1px solid #8b8be6;border-radius:2px;"></div>
<div class="a" style="left:111px;top:654px;width:1px;height:1px;background:#000;"></div>
<div class="t" style="left:81.9px;width:60px;text-align:center;top:669px;font-size:10px;color:#000;-webkit-text-stroke:0.3px #000">1</div>
<div class="a" style="left:133px;top:638px;width:41px;height:42px;background:#fff;"></div>
<div class="a" style="left:153px;top:654px;width:1px;height:1px;background:#000;"></div>
<div class="t" style="left:123.9px;width:60px;text-align:center;top:669px;font-size:10px;color:#000;-webkit-text-stroke:0.3px #000">1.3</div>
<div class="a" style="left:175px;top:638px;width:41px;height:42px;background:#fff;"></div>
<div class="a" style="left:195px;top:654px;width:1px;height:1px;background:#000;"></div>
<div class="t" style="left:165.9px;width:60px;text-align:center;top:669px;font-size:10px;color:#000;-webkit-text-stroke:0.3px #000">1.6</div>
<div class="a" style="left:6px;top:681px;width:42px;height:41px;background:#fff;"></div>
<svg class="a" style="left:25.4px;top:694.4px;" width="4" height="4" viewBox="0 0 4 4"><circle cx="2.0" cy="2.0" r="1.0" fill="#000"/></svg>
<div class="t" style="left:-2.1000000000000014px;width:60px;text-align:center;top:711px;font-size:10px;color:#000;-webkit-text-stroke:0.3px #000">2</div>
<div class="a" style="left:49px;top:681px;width:41px;height:41px;background:#fff;"></div>
<svg class="a" style="left:67.10000000000001px;top:694.1px;" width="4.6" height="4.6" viewBox="0 0 4.6 4.6"><circle cx="2.3" cy="2.3" r="1.3" fill="#000"/></svg>
<div class="t" style="left:39.900000000000006px;width:60px;text-align:center;top:711px;font-size:10px;color:#000;-webkit-text-stroke:0.3px #000">2.5</div>
<div class="a" style="left:91px;top:681px;width:41px;height:41px;background:#fff;"></div>
<svg class="a" style="left:108.80000000000001px;top:693.8px;" width="5.2" height="5.2" viewBox="0 0 5.2 5.2"><circle cx="2.6" cy="2.6" r="1.6" fill="#000"/></svg>
<div class="t" style="left:81.9px;width:60px;text-align:center;top:711px;font-size:10px;color:#000;-webkit-text-stroke:0.3px #000">3</div>
<div class="a" style="left:133px;top:681px;width:41px;height:41px;background:#fff;"></div>
<svg class="a" style="left:150.6px;top:693.6px;" width="5.6" height="5.6" viewBox="0 0 5.6 5.6"><circle cx="2.8" cy="2.8" r="1.8" fill="#000"/></svg>
<div class="t" style="left:123.9px;width:60px;text-align:center;top:711px;font-size:10px;color:#000;-webkit-text-stroke:0.3px #000">3.5</div>
<div class="a" style="left:175px;top:681px;width:41px;height:41px;background:#fff;"></div>
<svg class="a" style="left:192.25px;top:693.25px;" width="6.3" height="6.3" viewBox="0 0 6.3 6.3"><circle cx="3.15" cy="3.15" r="2.15" fill="#000"/></svg>
<div class="t" style="left:165.9px;width:60px;text-align:center;top:711px;font-size:10px;color:#000;-webkit-text-stroke:0.3px #000">4</div>
<div class="a" style="left:6px;top:723px;width:42px;height:41px;background:#fff;"></div>
<svg class="a" style="left:23.45px;top:734.4499999999999px;" width="7.9" height="7.9" viewBox="0 0 7.9 7.9"><circle cx="3.95" cy="3.95" r="2.95" fill="#000"/></svg>
<div class="t" style="left:-2.1000000000000014px;width:60px;text-align:center;top:753px;font-size:10px;color:#000;-webkit-text-stroke:0.3px #000">5</div>
<div class="a" style="left:49px;top:723px;width:41px;height:41px;background:#fff;"></div>
<svg class="a" style="left:65.10000000000001px;top:734.1px;" width="8.6" height="8.6" viewBox="0 0 8.6 8.6"><circle cx="4.3" cy="4.3" r="3.3" fill="#000"/></svg>
<div class="t" style="left:39.900000000000006px;width:60px;text-align:center;top:753px;font-size:10px;color:#000;-webkit-text-stroke:0.3px #000">6</div>
<div class="a" style="left:91px;top:723px;width:41px;height:41px;background:#fff;"></div>
<svg class="a" style="left:106.65px;top:733.65px;" width="9.5" height="9.5" viewBox="0 0 9.5 9.5"><circle cx="4.75" cy="4.75" r="3.75" fill="#000"/></svg>
<div class="t" style="left:81.9px;width:60px;text-align:center;top:753px;font-size:10px;color:#000;-webkit-text-stroke:0.3px #000">7</div>
<div class="a" style="left:133px;top:723px;width:41px;height:41px;background:#fff;"></div>
<svg class="a" style="left:148.15px;top:733.15px;" width="10.5" height="10.5" viewBox="0 0 10.5 10.5"><circle cx="5.25" cy="5.25" r="4.25" fill="#000"/></svg>
<div class="t" style="left:123.9px;width:60px;text-align:center;top:753px;font-size:10px;color:#000;-webkit-text-stroke:0.3px #000">8</div>
<div class="a" style="left:175px;top:723px;width:41px;height:41px;background:#fff;"></div>
<svg class="a" style="left:189.65px;top:732.65px;" width="11.5" height="11.5" viewBox="0 0 11.5 11.5"><circle cx="5.75" cy="5.75" r="4.75" fill="#000"/></svg>
<div class="t" style="left:165.9px;width:60px;text-align:center;top:753px;font-size:10px;color:#000;-webkit-text-stroke:0.3px #000">9</div>
<div class="a" style="left:6px;top:765px;width:42px;height:41px;background:#fff;"></div>
<svg class="a" style="left:20.9px;top:773.9px;" width="13" height="13" viewBox="0 0 13 13"><circle cx="6.5" cy="6.5" r="5.5" fill="#000"/></svg>
<div class="t" style="left:-2.1000000000000014px;width:60px;text-align:center;top:795px;font-size:10px;color:#000;-webkit-text-stroke:0.3px #000">10</div>
<div class="a" style="left:49px;top:765px;width:41px;height:41px;background:#fff;"></div>
<svg class="a" style="left:62.10000000000001px;top:773.1px;" width="14.6" height="14.6" viewBox="0 0 14.6 14.6"><circle cx="7.3" cy="7.3" r="6.3" fill="#000"/></svg>
<div class="t" style="left:39.900000000000006px;width:60px;text-align:center;top:795px;font-size:10px;color:#000;-webkit-text-stroke:0.3px #000">12</div>
<div class="a" style="left:91px;top:765px;width:41px;height:41px;background:#fff;"></div>
<svg class="a" style="left:103.05000000000001px;top:772.05px;" width="16.7" height="16.7" viewBox="0 0 16.7 16.7"><circle cx="8.35" cy="8.35" r="7.35" fill="#000"/></svg>
<div class="t" style="left:81.9px;width:60px;text-align:center;top:795px;font-size:10px;color:#000;-webkit-text-stroke:0.3px #000">14</div>
<div class="a" style="left:133px;top:765px;width:41px;height:41px;background:#fff;"></div>
<svg class="a" style="left:144.05px;top:771.05px;" width="18.7" height="18.7" viewBox="0 0 18.7 18.7"><circle cx="9.35" cy="9.35" r="8.35" fill="#000"/></svg>
<div class="t" style="left:123.9px;width:60px;text-align:center;top:795px;font-size:10px;color:#000;-webkit-text-stroke:0.3px #000">16</div>
<div class="a" style="left:175px;top:765px;width:41px;height:41px;background:#fff;"></div>
<svg class="a" style="left:184.55px;top:769.55px;" width="21.7" height="21.7" viewBox="0 0 21.7 21.7"><circle cx="10.85" cy="10.85" r="9.85" fill="#000"/></svg>
<div class="t" style="left:165.9px;width:60px;text-align:center;top:795px;font-size:10px;color:#000;-webkit-text-stroke:0.3px #000">20</div>
<div class="a" style="left:6px;top:807px;width:42px;height:41px;background:#fff;"></div>
<svg class="a" style="left:16.599999999999998px;top:811.6px;" width="21.6" height="21.6" viewBox="0 0 21.6 21.6"><circle cx="10.8" cy="10.8" r="9.8" fill="#000"/></svg>
<div class="t" style="left:-2.1000000000000014px;width:60px;text-align:center;top:837px;font-size:10px;color:#000;-webkit-text-stroke:0.3px #000">25</div>
<div class="a" style="left:49px;top:807px;width:41px;height:41px;background:#fff;"></div>
<svg class="a" style="left:58.60000000000001px;top:811.6px;" width="21.6" height="21.6" viewBox="0 0 21.6 21.6"><circle cx="10.8" cy="10.8" r="9.8" fill="#000"/></svg>
<div class="t" style="left:39.900000000000006px;width:60px;text-align:center;top:837px;font-size:10px;color:#000;-webkit-text-stroke:0.3px #000">30</div>
<div class="a" style="left:91px;top:807px;width:41px;height:41px;background:#fff;"></div>
<svg class="a" style="left:100.60000000000001px;top:811.6px;" width="21.6" height="21.6" viewBox="0 0 21.6 21.6"><circle cx="10.8" cy="10.8" r="9.8" fill="#000"/></svg>
<div class="t" style="left:81.9px;width:60px;text-align:center;top:837px;font-size:10px;color:#000;-webkit-text-stroke:0.3px #000">35</div>
<div class="a" style="left:133px;top:807px;width:41px;height:41px;background:#fff;"></div>
<svg class="a" style="left:142.6px;top:811.6px;" width="21.6" height="21.6" viewBox="0 0 21.6 21.6"><circle cx="10.8" cy="10.8" r="9.8" fill="#000"/></svg>
<div class="t" style="left:123.9px;width:60px;text-align:center;top:837px;font-size:10px;color:#000;-webkit-text-stroke:0.3px #000">40</div>
<div class="a" style="left:175px;top:807px;width:41px;height:41px;background:#fff;"></div>
<svg class="a" style="left:184.6px;top:811.6px;" width="21.6" height="21.6" viewBox="0 0 21.6 21.6"><circle cx="10.8" cy="10.8" r="9.8" fill="#000"/></svg>
<div class="t" style="left:165.9px;width:60px;text-align:center;top:837px;font-size:10px;color:#000;-webkit-text-stroke:0.3px #000">50</div>
<div class="a" style="left:6px;top:849px;width:42px;height:41px;background:#fff;"></div>
<svg class="a" style="left:16.599999999999998px;top:853.6px;" width="21.6" height="21.6" viewBox="0 0 21.6 21.6"><circle cx="10.8" cy="10.8" r="9.8" fill="#000"/></svg>
<div class="t" style="left:-2.1000000000000014px;width:60px;text-align:center;top:879px;font-size:10px;color:#000;-webkit-text-stroke:0.3px #000">60</div>
<div class="a" style="left:49px;top:849px;width:41px;height:41px;background:#fff;"></div>
<svg class="a" style="left:58.60000000000001px;top:853.6px;" width="21.6" height="21.6" viewBox="0 0 21.6 21.6"><circle cx="10.8" cy="10.8" r="9.8" fill="#000"/></svg>
<div class="t" style="left:39.900000000000006px;width:60px;text-align:center;top:879px;font-size:10px;color:#000;-webkit-text-stroke:0.3px #000">70</div>
<div class="a" style="left:91px;top:849px;width:41px;height:41px;background:#fff;"></div>
<svg class="a" style="left:100.60000000000001px;top:853.6px;" width="21.6" height="21.6" viewBox="0 0 21.6 21.6"><circle cx="10.8" cy="10.8" r="9.8" fill="#000"/></svg>
<div class="t" style="left:81.9px;width:60px;text-align:center;top:879px;font-size:10px;color:#000;-webkit-text-stroke:0.3px #000">80</div>
<div class="a" style="left:133px;top:849px;width:41px;height:41px;background:#fff;"></div>
<svg class="a" style="left:142.6px;top:853.6px;" width="21.6" height="21.6" viewBox="0 0 21.6 21.6"><circle cx="10.8" cy="10.8" r="9.8" fill="#000"/></svg>
<div class="t" style="left:123.9px;width:60px;text-align:center;top:879px;font-size:10px;color:#000;-webkit-text-stroke:0.3px #000">100</div>
<div class="a" style="left:175px;top:849px;width:41px;height:41px;background:#fff;"></div>
<svg class="a" style="left:184.6px;top:853.6px;" width="21.6" height="21.6" viewBox="0 0 21.6 21.6"><circle cx="10.8" cy="10.8" r="9.8" fill="#000"/></svg>
<div class="t" style="left:165.9px;width:60px;text-align:center;top:879px;font-size:10px;color:#000;-webkit-text-stroke:0.3px #000">120</div>
<div class="a" style="left:6px;top:891px;width:42px;height:41px;background:#fff;"></div>
<svg class="a" style="left:16.599999999999998px;top:895.6px;" width="21.6" height="21.6" viewBox="0 0 21.6 21.6"><circle cx="10.8" cy="10.8" r="9.8" fill="#000"/></svg>
<div class="t" style="left:-2.1000000000000014px;width:60px;text-align:center;top:921px;font-size:10px;color:#000;-webkit-text-stroke:0.3px #000">160</div>
<div class="a" style="left:49px;top:891px;width:41px;height:41px;background:#fff;"></div>
<svg class="a" style="left:58.60000000000001px;top:895.6px;" width="21.6" height="21.6" viewBox="0 0 21.6 21.6"><circle cx="10.8" cy="10.8" r="9.8" fill="#000"/></svg>
<div class="t" style="left:39.900000000000006px;width:60px;text-align:center;top:921px;font-size:10px;color:#000;-webkit-text-stroke:0.3px #000">200</div>
<div class="a" style="left:91px;top:891px;width:41px;height:41px;background:#fff;"></div>
<svg class="a" style="left:100.60000000000001px;top:895.6px;" width="21.6" height="21.6" viewBox="0 0 21.6 21.6"><circle cx="10.8" cy="10.8" r="9.8" fill="#000"/></svg>
<div class="t" style="left:81.9px;width:60px;text-align:center;top:921px;font-size:10px;color:#000;-webkit-text-stroke:0.3px #000">250</div>
<div class="a" style="left:133px;top:891px;width:41px;height:41px;background:#fff;"></div>
<svg class="a" style="left:142.6px;top:895.6px;" width="21.6" height="21.6" viewBox="0 0 21.6 21.6"><circle cx="10.8" cy="10.8" r="9.8" fill="#000"/></svg>
<div class="t" style="left:123.9px;width:60px;text-align:center;top:921px;font-size:10px;color:#000;-webkit-text-stroke:0.3px #000">300</div>
<div class="a" style="left:175px;top:891px;width:41px;height:41px;background:#fff;"></div>
<svg class="a" style="left:184.6px;top:895.6px;" width="21.6" height="21.6" viewBox="0 0 21.6 21.6"><circle cx="10.8" cy="10.8" r="9.8" fill="#000"/></svg>
<div class="t" style="left:165.9px;width:60px;text-align:center;top:921px;font-size:10px;color:#000;-webkit-text-stroke:0.3px #000">350</div>
<div class="a" style="left:6px;top:933px;width:42px;height:27px;background:#fff;"></div>
<svg class="a" style="left:16.599999999999998px;top:937.6px;" width="21.6" height="21.6" viewBox="0 0 21.6 21.6"><circle cx="10.8" cy="10.8" r="9.8" fill="#000"/></svg>
<div class="a" style="left:49px;top:933px;width:41px;height:27px;background:#fff;"></div>
<svg class="a" style="left:58.60000000000001px;top:937.6px;" width="21.6" height="21.6" viewBox="0 0 21.6 21.6"><circle cx="10.8" cy="10.8" r="9.8" fill="#000"/></svg>
<div class="a" style="left:91px;top:933px;width:41px;height:27px;background:#fff;"></div>
<svg class="a" style="left:100.60000000000001px;top:937.6px;" width="21.6" height="21.6" viewBox="0 0 21.6 21.6"><circle cx="10.8" cy="10.8" r="9.8" fill="#000"/></svg>
<div class="a" style="left:133px;top:933px;width:41px;height:27px;background:#fff;"></div>
<svg class="a" style="left:142.6px;top:937.6px;" width="21.6" height="21.6" viewBox="0 0 21.6 21.6"><circle cx="10.8" cy="10.8" r="9.8" fill="#000"/></svg>
<div class="a" style="left:175px;top:933px;width:41px;height:27px;background:#fff;"></div>
<svg class="a" style="left:184.6px;top:937.6px;" width="21.6" height="21.6" viewBox="0 0 21.6 21.6"><circle cx="10.8" cy="10.8" r="9.8" fill="#000"/></svg>
<div class="a" style="left:217px;top:637px;width:17px;height:323px;background:#e8e8e8;"></div>
<div class="a" style="left:218px;top:638px;width:15px;height:15px;background:#939393;border:1px solid #707070;border-radius:3px;"></div>
<div class="a" style="left:225px;top:643px;width:1px;height:1px;background:#fff;"></div>
<div class="a" style="left:224px;top:644px;width:3px;height:1px;background:#fff;"></div>
<div class="a" style="left:223px;top:645px;width:5px;height:1px;background:#fff;"></div>
<div class="a" style="left:218px;top:654px;width:15px;height:220px;background:#969696;border:1px solid #707070;border-radius:3px;"></div>
<div class="a" style="left:218px;top:944px;width:15px;height:15px;background:#939393;border:1px solid #707070;border-radius:3px;"></div>
<div class="a" style="left:223px;top:950px;width:5px;height:1px;background:#fff;"></div>
<div class="a" style="left:224px;top:951px;width:3px;height:1px;background:#fff;"></div>
<div class="a" style="left:225px;top:952px;width:1px;height:1px;background:#fff;"></div>
<div class="a" style="left:240px;top:68px;width:13px;height:877px;background:#efefef;"></div>
<div class="a" style="left:239px;top:946px;width:15px;height:15px;background:#d9d9d9;border:1px solid #d0d0d0;border-radius:2px;"></div>
<div class="a" style="left:244px;top:952px;width:5px;height:1px;background:#fff;"></div>
<div class="a" style="left:245px;top:953px;width:3px;height:1px;background:#fff;"></div>
<div class="a" style="left:246px;top:954px;width:1px;height:1px;background:#fff;"></div>
<div class="a" style="left:0px;top:965px;width:1280px;height:1px;background:#d8d8d8;"></div>
<div class="a" style="left:258px;top:75px;width:837px;height:858px;background:#fff;border:1px solid #a4a4a4;border-radius:2px;"></div>
<div class="a" style="left:260px;top:77px;width:817px;height:838px;background:#b0b0b0;"></div>
<div class="a" style="left:412px;top:240px;width:512px;height:512px;background:#fff;"></div>
<div class="a" style="left:1078px;top:77px;width:15px;height:838px;background:#e8e8e8;"></div>
<div class="a" style="left:1078px;top:77px;width:15px;height:15px;background:#939393;border:1px solid #707070;border-radius:3px;"></div>
<div class="a" style="left:1085px;top:83px;width:1px;height:1px;background:#fff;"></div>
<div class="a" style="left:1084px;top:84px;width:3px;height:1px;background:#fff;"></div>
<div class="a" style="left:1083px;top:85px;width:5px;height:1px;background:#fff;"></div>
<div class="a" style="left:1078px;top:240px;width:15px;height:506px;background:#989898;border:1px solid #707070;border-radius:3px;"></div>
<div class="a" style="left:1078px;top:900px;width:15px;height:15px;background:#939393;border:1px solid #707070;border-radius:3px;"></div>
<div class="a" style="left:1083px;top:906px;width:5px;height:1px;background:#fff;"></div>
<div class="a" style="left:1084px;top:907px;width:3px;height:1px;background:#fff;"></div>
<div class="a" style="left:1085px;top:908px;width:1px;height:1px;background:#fff;"></div>
<div class="a" style="left:260px;top:916px;width:817px;height:15px;background:#e8e8e8;"></div>
<div class="a" style="left:1078px;top:916px;width:15px;height:15px;background:#e8e8e8;"></div>
<div class="a" style="left:260px;top:916px;width:15px;height:15px;background:#939393;border:1px solid #707070;border-radius:3px;"></div>
<svg class="a" style="left:266.0px;top:920.5px;" width="3.5" height="6" viewBox="0 0 3.5 6"><path d="M3.0 0 L3.0 6 L0 3.0 Z" fill="#fff"/></svg>
<div class="a" style="left:427px;top:916px;width:484px;height:15px;background:#989898;border:1px solid #707070;border-radius:3px;"></div>
<div class="a" style="left:1062px;top:916px;width:15px;height:15px;background:#939393;border:1px solid #707070;border-radius:3px;"></div>
<svg class="a" style="left:1068.0px;top:920.5px;" width="3.5" height="6" viewBox="0 0 3.5 6"><path d="M0 0 L0 6 L3.0 3.0 Z" fill="#fff"/></svg>
<div class="a" style="left:258px;top:937px;width:180px;height:24px;background:#d4d4fa;border:1px solid #8a8ae0;border-radius:2px;"></div>
<svg class="a" style="left:263px;top:941px;" width="14" height="16" viewBox="0 0 14 16"><defs><radialGradient id="tg" cx="0.55" cy="0.45" r="0.6"><stop offset="0" stop-color="#f0f0a8"/><stop offset="0.45" stop-color="#9ee060"/><stop offset="1" stop-color="#1a6a40"/></radialGradient></defs><rect x="0.5" y="0.5" width="13" height="15" fill="url(#tg)" stroke="#0a1828"/><rect x="1" y="1" width="9" height="3.5" fill="#4a9ee0"/><path d="M1 9.5 Q6 11 10 14.5 L1 15.5 Z" fill="#5a4a18" opacity="0.75"/><path d="M11 6 L13 8 L13 12 L11 10 Z" fill="#d07050" opacity="0.6"/><path d="M10 0 L14 4 L10 4 Z" fill="#fff"/></svg>
<div class="t" style="left:282px;top:944px;font-size:12px;color:#111;letter-spacing:-0.05px;">НовыйХолст1.sai2</div>
<div class="t" style="left:134px;width:300px;text-align:right;top:946px;font-size:10px;color:#111;font-weight:bold;letter-spacing:-0.2px">100%</div>
<div class="a" style="left:1080px;top:937px;width:15px;height:11px;background:#dadada;border:1px solid #d2d2d2;border-radius:2px;"></div>
<div class="a" style="left:1087px;top:941px;width:1px;height:1px;background:#fff;"></div>
<div class="a" style="left:1086px;top:942px;width:3px;height:1px;background:#fff;"></div>
<div class="a" style="left:1085px;top:943px;width:5px;height:1px;background:#fff;"></div>
<div class="a" style="left:1080px;top:950px;width:15px;height:11px;background:#dadada;border:1px solid #d2d2d2;border-radius:2px;"></div>
<div class="a" style="left:1085px;top:954px;width:5px;height:1px;background:#fff;"></div>
<div class="a" style="left:1086px;top:955px;width:3px;height:1px;background:#fff;"></div>
<div class="a" style="left:1087px;top:956px;width:1px;height:1px;background:#fff;"></div>
<div class="a" style="left:1099px;top:48px;width:1px;height:917px;background:#cdcdcd;"></div>
<div class="a" style="left:1104px;top:52px;width:172px;height:150px;background:#fff;border:1px solid #a4a4a4;border-radius:2px;"></div>
<div class="a" style="left:1106px;top:54px;width:11px;height:146px;background:#b0b0b0;"></div>
<div class="a" style="left:1263px;top:54px;width:11px;height:146px;background:#b0b0b0;"></div>
<div class="a" style="left:1190px;top:54px;width:1px;height:74px;background:#6a6a6a;"></div>
<div class="t" style="left:1107px;top:208px;font-size:11px;color:#111;">Масштаб</div>
<div class="t" style="left:909px;width:300px;text-align:right;top:208px;font-size:11px;color:#111;letter-spacing:0.3px;">100%</div>
<div class="a" style="left:1108px;top:220px;width:101px;height:2px;background:#6a6a6a;"></div>
<svg class="a" style="left:1153px;top:221px;" width="11" height="7" viewBox="0 0 11 7"><path d="M5.5 0.8 L10 6.3 L1 6.3 Z" fill="#fff" stroke="#000" stroke-width="1.2"/></svg>
<div class="t" style="left:1108px;top:231px;font-size:11px;color:#111;">Угол</div>
<div class="t" style="left:909px;width:300px;text-align:right;top:231px;font-size:11px;color:#111;letter-spacing:0.3px;">+0°</div>
<div class="a" style="left:1108px;top:243px;width:101px;height:2px;background:#6a6a6a;"></div>
<svg class="a" style="left:1153px;top:244px;" width="11" height="7" viewBox="0 0 11 7"><path d="M5.5 0.8 L10 6.3 L1 6.3 Z" fill="#fff" stroke="#000" stroke-width="1.2"/></svg>
<div class="a" style="left:1215px;top:206px;width:19px;height:19px;background:#939393;border:1px solid #707070;border-radius:3px;"></div>
<div class="a" style="left:1215px;top:229px;width:19px;height:19px;background:#939393;border:1px solid #707070;border-radius:3px;"></div>
<div class="a" style="left:1236px;top:206px;width:19px;height:19px;background:#939393;border:1px solid #707070;border-radius:3px;"></div>
<div class="a" style="left:1236px;top:229px;width:19px;height:19px;background:#939393;border:1px solid #707070;border-radius:3px;"></div>
<div class="a" style="left:1257px;top:206px;width:19px;height:19px;background:#939393;border:1px solid #707070;border-radius:3px;"></div>
<div class="a" style="left:1257px;top:229px;width:19px;height:19px;background:#939393;border:1px solid #707070;border-radius:3px;"></div>
<div class="a" style="left:1219px;top:214px;width:11px;height:3px;background:#fff;"></div>
<div class="a" style="left:1240px;top:214px;width:11px;height:3px;background:#fff;"></div>
<div class="a" style="left:1244px;top:210px;width:3px;height:11px;background:#fff;"></div>
<div class="a" style="left:1263px;top:212px;width:7px;height:7px;background:#fff;"></div>
<svg class="a" style="left:1215px;top:229px;" width="19" height="19" viewBox="0 0 19 19"><path d="M5.15 9.45 A4.3 4.3 0 1 1 7.3 13.2" stroke="#fff" stroke-width="2.2" fill="none"/><path d="M2 9.2 L8.6 9.2 L5.3 13 Z" fill="#fff"/></svg>
<svg class="a" style="left:1236px;top:229px;" width="19" height="19" viewBox="0 0 19 19"><g transform="translate(19 0) scale(-1 1)"><path d="M5.15 9.45 A4.3 4.3 0 1 1 7.3 13.2" stroke="#fff" stroke-width="2.2" fill="none"/><path d="M2 9.2 L8.6 9.2 L5.3 13 Z" fill="#fff"/></g></svg>
<div class="a" style="left:1263px;top:235px;width:7px;height:7px;background:#fff;"></div>
<div class="a" style="left:1104px;top:260px;width:78px;height:1px;background:#d6d6d6;"></div>
<div class="a" style="left:1198px;top:260px;width:78px;height:1px;background:#d6d6d6;"></div>
<div class="a" style="left:1182px;top:259px;width:16px;height:3px;background:#777;border-radius:2px;"></div>
<svg class="a" style="left:1104px;top:269px;" width="10" height="6" viewBox="0 0 10 6"><path d="M0 0 H9 L4.5 5.5 Z" fill="#6b3a16"/></svg>
<div class="t" style="left:1115px;top:267px;font-size:12px;color:#6e4526;letter-spacing:0.1px;">Эффекты слоя</div>
<div class="t" style="left:1115px;top:289px;font-size:12px;color:#111;">Эффект</div>
<div class="a" style="left:1168px;top:284px;width:104px;height:19px;background:#fff;border:1px solid #909090;border-radius:2px;"></div>
<div class="t" style="left:1174px;top:288px;font-size:12px;color:#111;letter-spacing:0.7px;">[ Нет ]</div>
<div class="a" style="left:1255px;top:286px;width:15px;height:15px;background:#939393;border:1px solid #707070;border-radius:2px;"></div>
<div class="a" style="left:1260px;top:292px;width:5px;height:1px;background:#fff;"></div>
<div class="a" style="left:1261px;top:293px;width:3px;height:1px;background:#fff;"></div>
<div class="a" style="left:1262px;top:294px;width:1px;height:1px;background:#fff;"></div>
<div class="t" style="left:1116px;top:311px;font-size:12px;color:#c4c4c4;">Ширина</div>
<div class="a" style="left:1168px;top:307px;width:104px;height:17px;background:#fff;border:1px solid #e0e0e0;border-radius:2px;"></div>
<div class="a" style="left:1170px;top:309px;width:7px;height:13px;background:#dedede;"></div>
<div class="t" style="left:967px;width:300px;text-align:right;top:310px;font-size:12px;color:#c4c4c4;">1</div>
<div class="t" style="left:1116px;top:332px;font-size:12px;color:#c4c4c4;">Сила</div>
<div class="a" style="left:1168px;top:328px;width:104px;height:17px;background:#fff;border:1px solid #e0e0e0;border-radius:2px;"></div>
<div class="t" style="left:967px;width:300px;text-align:right;top:331px;font-size:12px;color:#c4c4c4;">0</div>
<div class="a" style="left:1104px;top:355px;width:172px;height:1px;background:#dcdcdc;"></div>
<svg class="a" style="left:1104px;top:365px;" width="10" height="6" viewBox="0 0 10 6"><path d="M0 0 H9 L4.5 5.5 Z" fill="#6b3a16"/></svg>
<div class="t" style="left:1116px;top:363px;font-size:12px;color:#6e4526;letter-spacing:0.2px;">Текстура</div>
<div class="t" style="left:1116px;top:384px;font-size:12px;color:#111;">Выбрать</div>
<div class="a" style="left:1168px;top:379px;width:104px;height:19px;background:#fff;border:1px solid #909090;border-radius:2px;"></div>
<div class="t" style="left:1174px;top:383px;font-size:12px;color:#111;letter-spacing:0.7px;">[ Нет ]</div>
<div class="a" style="left:1255px;top:381px;width:15px;height:15px;background:#939393;border:1px solid #707070;border-radius:2px;"></div>
<div class="a" style="left:1260px;top:387px;width:5px;height:1px;background:#fff;"></div>
<div class="a" style="left:1261px;top:388px;width:3px;height:1px;background:#fff;"></div>
<div class="a" style="left:1262px;top:389px;width:1px;height:1px;background:#fff;"></div>
<div class="t" style="left:1116px;top:406px;font-size:12px;color:#c4c4c4;">Сила</div>
<div class="a" style="left:1168px;top:402px;width:104px;height:17px;background:#fff;border:1px solid #e0e0e0;border-radius:2px;"></div>
<div class="t" style="left:967px;width:300px;text-align:right;top:405px;font-size:12px;color:#c4c4c4;">0</div>
<div class="t" style="left:1116px;top:427px;font-size:12px;color:#c4c4c4;">Масштаб</div>
<div class="a" style="left:1168px;top:423px;width:104px;height:17px;background:#fff;border:1px solid #e0e0e0;border-radius:2px;"></div>
<div class="a" style="left:1170px;top:425px;width:2px;height:13px;background:#dedede;"></div>
<div class="t" style="left:968px;width:300px;text-align:right;top:426px;font-size:12px;color:#c4c4c4;letter-spacing:0.5px;">10%</div>
<div class="a" style="left:1116px;top:444px;width:15px;height:15px;background:#fff;border:1px solid #d8d8d8;border-radius:2px;"></div>
<div class="t" style="left:1133px;top:446px;font-size:12px;color:#c4c4c4;letter-spacing:0.6px;">Применить к вектору</div>
<div class="a" style="left:1104px;top:469px;width:172px;height:1px;background:#dcdcdc;"></div>
<div class="t" style="left:1108px;top:479px;font-size:12px;color:#111;letter-spacing:0.6px;">Режим</div>
<div class="a" style="left:1157px;top:474px;width:115px;height:19px;background:#fff;border:1px solid #909090;border-radius:2px;"></div>
<div class="t" style="left:1163px;top:478px;font-size:12px;color:#111;">Обычный</div>
<div class="a" style="left:1255px;top:476px;width:15px;height:15px;background:#939393;border:1px solid #707070;border-radius:2px;"></div>
<div class="a" style="left:1260px;top:482px;width:5px;height:1px;background:#fff;"></div>
<div class="a" style="left:1261px;top:483px;width:3px;height:1px;background:#fff;"></div>
<div class="a" style="left:1262px;top:484px;width:1px;height:1px;background:#fff;"></div>
<div class="a" style="left:1098px;top:498px;width:3px;height:16px;background:#777;border-radius:2px;"></div>
<div class="t" style="left:1108px;top:501px;font-size:12px;color:#111;letter-spacing:0.35px;">Непроз.</div>
<div class="a" style="left:1157px;top:497px;width:115px;height:17px;background:#fff;border:1px solid #a0a0a0;border-radius:2px;"></div>
<div class="a" style="left:1159px;top:499px;width:111px;height:13px;background:#b8b8b8;"></div>
<div class="t" style="left:968px;width:300px;text-align:right;top:500px;font-size:12px;color:#111;letter-spacing:0.3px;">100%</div>
<div class="t" style="left:1107px;top:523px;font-size:12px;color:#111;">Замок</div>
<div class="a" style="left:1157px;top:518px;width:19px;height:19px;background:#f4f4f4;border:1px solid #e2e2e2;border-radius:3px;"></div>
<div class="a" style="left:1178px;top:518px;width:19px;height:19px;background:#f4f4f4;border:1px solid #e2e2e2;border-radius:3px;"></div>
<div class="a" style="left:1199px;top:518px;width:19px;height:19px;background:#f4f4f4;border:1px solid #e2e2e2;border-radius:3px;"></div>
<div class="a" style="left:1220px;top:518px;width:19px;height:19px;background:#f4f4f4;border:1px solid #e2e2e2;border-radius:3px;"></div>
<div class="a" style="left:1162px;top:523px;width:9px;height:9px;background:#f8f8f8;border:1px solid #ddd;"></div>
<div class="a" style="left:1164px;top:525px;width:2px;height:2px;background:#e4e4e4;"></div>
<div class="a" style="left:1168px;top:525px;width:2px;height:2px;background:#e4e4e4;"></div>
<div class="a" style="left:1166px;top:527px;width:2px;height:2px;background:#e4e4e4;"></div>
<div class="a" style="left:1164px;top:529px;width:2px;height:2px;background:#e4e4e4;"></div>
<div class="a" style="left:1168px;top:529px;width:2px;height:2px;background:#e4e4e4;"></div>
<svg class="a" style="left:1181px;top:520px;" width="15" height="15" viewBox="0 0 15 15"><path d="M1.2 13 L2.3 9.8 L11 1.2 L13.4 3.6 L4.6 12.2 Z M2.3 9.8 L4.6 12.2" fill="#fff" stroke="#444" stroke-width="0.9"/></svg>
<svg class="a" style="left:1201px;top:520px;" width="15" height="15" viewBox="0 0 15 15"><path d="M7.5 1.5 V13.5 M1.5 7.5 H13.5" stroke="#333" stroke-width="1.4"/><path d="M7.5 0.5 L5.3 3.5 H9.7 Z M7.5 14.5 L5.3 11.5 H9.7 Z M0.5 7.5 L3.5 5.3 V9.7 Z M14.5 7.5 L11.5 5.3 V9.7 Z" fill="#333"/></svg>
<svg class="a" style="left:1222px;top:520px;" width="15" height="15" viewBox="0 0 15 15"><path d="M4.5 7 V5 A3 3 0 0 1 10.5 5 V7" fill="none" stroke="#444" stroke-width="1.4"/><rect x="3" y="7" width="9" height="6.5" fill="#777" stroke="#444" stroke-width="0.8"/><rect x="7" y="9" width="1.2" height="2.5" fill="#111"/></svg>
<div class="a" style="left:1108px;top:541px;width:15px;height:15px;background:#fff;border:1px solid #888;border-radius:2px;"></div>
<div class="t" style="left:1125px;top:543px;font-size:12px;color:#111;letter-spacing:0.35px;">Прикрепление</div>
<svg class="a" style="left:1107px;top:559px;" width="17" height="17" viewBox="0 0 17 17"><circle cx="8.5" cy="8.5" r="7.3" fill="#fff" stroke="#888" stroke-width="1"/></svg>
<div class="t" style="left:1125px;top:562px;font-size:12px;color:#111;letter-spacing:0.16px;">Источник выбора</div>
<div class="a" style="left:1104px;top:579px;width:172px;height:382px;background:#f7f7f7;border:1px solid #a8a8a8;border-radius:2px;"></div>
<svg class="a" style="left:1114px;top:586px;" width="16" height="18" viewBox="0 0 16 18"><defs><linearGradient id="pg" x1="0.3" y1="0.3" x2="1" y2="1"><stop offset="0" stop-color="#fff"/><stop offset="1" stop-color="#c8c8c8"/></linearGradient></defs><path d="M0.5 0.5 H10 L14.5 5 V16.5 H0.5 Z" fill="url(#pg)" stroke="#888" stroke-width="1"/><path d="M10 0.5 V5 H14.5" fill="#fff" stroke="#888" stroke-width="0.8"/></svg>
<svg class="a" style="left:1139px;top:586px;" width="18" height="18" viewBox="0 0 18 18"><defs><linearGradient id="pg" x1="0.3" y1="0.3" x2="1" y2="1"><stop offset="0" stop-color="#fff"/><stop offset="1" stop-color="#c8c8c8"/></linearGradient></defs><path d="M0.5 0.5 H14.5 V16.5 H0.5 Z" fill="url(#pg)" stroke="#888" stroke-width="1"/><path d="M3 15 L7 9 L10 12 Z" fill="#fff" stroke="#444" stroke-width="0.8"/><path d="M8 8 L13 2 L17 6 L11 11 Z" fill="#888" stroke="#444" stroke-width="0.8"/></svg>
<svg class="a" style="left:1164px;top:586px;" width="16" height="18" viewBox="0 0 16 18"><path d="M0.5 0.5 H14.5 V16.5 H0.5 Z" fill="#dcdcdc" stroke="#999" stroke-width="1"/><path d="M3 1 V7 L1 9" fill="none" stroke="#aaa" stroke-width="0.8"/></svg>
<svg class="a" style="left:1211px;top:584px;" width="22" height="21" viewBox="0 0 22 21"><path d="M1 9 H20 M1 14 H20 M11 1 V19" stroke="#c4c4c4" stroke-width="0.8"/><path d="M5 14 L11 9" stroke="#111" stroke-width="1.5"/><path d="M5 14 H16 V3" fill="none" stroke="#111" stroke-width="1.5"/><path d="M16 0.5 L13.5 4 H18.5 Z" fill="#111"/><path d="M14 17 H19 L16.5 20 Z" fill="#000"/><path d="M1 19 L5 14" stroke="#bbb" stroke-width="0.6" stroke-dasharray="1,1"/></svg>
<div class="a" style="left:1250px;top:587px;width:17px;height:15px;background:#777;border:1px solid #555;"></div>
<svg class="a" style="left:1254px;top:590px;" width="9" height="9" viewBox="0 0 9 9"><circle cx="4.5" cy="4.5" r="3.6" fill="#fff"/></svg>
<svg class="a" style="left:1114px;top:609px;" width="16" height="17" viewBox="0 0 16 17"><rect x="0.5" y="0.5" width="12" height="9" fill="#eee" stroke="#888"/><rect x="2.5" y="6.5" width="12.5" height="10" fill="url(#pg)" stroke="#888"/><circle cx="4" cy="5" r="2.6" fill="#bbb"/><rect x="5" y="2" width="6" height="4" fill="#999"/><path d="M8 5 V11" stroke="#000" stroke-width="2.4"/><path d="M4.5 10 H11.5 L8 14.5 Z" fill="#000"/></svg>
<svg class="a" style="left:1138px;top:609px;" width="18" height="17" viewBox="0 0 18 17"><rect x="3.5" y="3.5" width="13" height="13" fill="url(#pg)" stroke="#888"/><rect x="0.5" y="0.5" width="13" height="12" fill="#fff" stroke="#333" stroke-dasharray="1.2,1"/><path d="M7 3 V10 M3.5 6.5 H10.5" stroke="#000" stroke-width="2.2"/></svg>
<svg class="a" style="left:1164px;top:609px;" width="17" height="17" viewBox="0 0 17 17"><defs><linearGradient id="pg" x1="0.3" y1="0.3" x2="1" y2="1"><stop offset="0" stop-color="#fff"/><stop offset="1" stop-color="#c8c8c8"/></linearGradient></defs><path d="M0.5 0.5 H14.5 V16.5 H0.5 Z" fill="url(#pg)" stroke="#999" stroke-width="1"/><path d="M3 11 L9 5 L14 10 L8 15 Q6 16 5 15 Z" fill="#eee" stroke="#777" stroke-width="0.8"/><path d="M6 8 L9 5 L14 10 L11 13 Z" fill="#888" stroke="#555" stroke-width="0.8"/></svg>
<svg class="a" style="left:1189px;top:609px;" width="15" height="17" viewBox="0 0 15 17"><rect x="0.5" y="2.5" width="14" height="2.5" rx="1" fill="#888" stroke="#555" stroke-width="0.8"/><rect x="5.5" y="0.5" width="4" height="2" fill="#777"/><path d="M1.5 5 L2.8 16.5 H12.2 L13.5 5 Z" fill="#888" stroke="#555" stroke-width="0.8"/><path d="M5 7 V15 M7.5 7 V15 M10 7 V15" stroke="#ddd" stroke-width="1"/></svg>
<svg class="a" style="left:1249px;top:609px;" width="20" height="18" viewBox="0 0 20 18"><rect x="0.5" y="0.5" width="11" height="9" fill="#e0e0e0" stroke="#d4d4d4"/><circle cx="5.5" cy="5" r="3" fill="#f2f2f2"/><rect x="7.5" y="7.5" width="11" height="10" fill="#f6f6f6" stroke="#d8d8d8"/><path d="M13 9.5 V15.5 M10 12.5 H16" stroke="#d2d2d2" stroke-width="1.6"/></svg>
<div class="a" style="left:1106px;top:631px;width:152px;height:312px;background:#b0b0b0;"></div>
<div class="a" style="left:1110px;top:632px;width:144px;height:42px;background:#dcdcfb;border:1px solid #8b8be6;border-radius:2px;"></div>
<div class="a" style="left:1115px;top:636px;width:19px;height:16px;background:#fff;border:1px solid #8b8be6;"></div>
<svg class="a" style="left:1116px;top:638px;" width="18" height="13" viewBox="0 0 18 13"><g transform="translate(1 1)"><path d="M0.3 3.3 Q6 0 14.6 0.5" stroke="#777" stroke-width="0.9" fill="none"/><path d="M0.4 6.8 Q7 1.6 14 4.3" stroke="#000" stroke-width="1.7" fill="none"/><path d="M9 3.2 L14.8 4.3 L9.5 5.4 Z" fill="#000"/><circle cx="7.8" cy="6" r="2.9" fill="#000"/><circle cx="6.3" cy="5.1" r="0.95" fill="#fff"/><path d="M2.3 8.7 Q8 9.7 13.3 6.5" stroke="#444" stroke-width="1" stroke-dasharray="0.8,0.9" fill="none"/></g></svg>
<div class="a" style="left:1115px;top:654px;width:19px;height:16px;background:#fff;border:1px solid #8b8be6;"></div>
<svg class="a" style="left:1115px;top:654px;" width="19" height="16" viewBox="0 0 19 16"><path d="M4.3 13.6 L5.3 10.6 L13.8 2.1 L16.2 4.5 L7.7 13 Z M5.3 10.6 L7.7 13" fill="#fff" stroke="#333" stroke-width="0.9" stroke-dasharray="1.1,0.5"/></svg>
<div class="a" style="left:1137px;top:636px;width:34px;height:34px;background:#fff;border:1px solid #8b8be6;"></div>
<svg class="a" style="left:1173px;top:634px;" width="16" height="15" viewBox="0 0 16 15"><path d="M1 13.5 L4.5 8 Q6 6.5 7.5 7.5 Q8.5 9 7 10.5 Z" fill="#fff" stroke="#555" stroke-width="0.9"/><circle cx="5.3" cy="10" r="0.9" fill="#000"/><path d="M6.2 6.2 L10.2 2.2 L14.2 6.2 L10.2 10.2 Z" fill="#bdbdbd" stroke="#222" stroke-width="1"/></svg>
<div class="t" style="left:1190px;top:636px;font-size:12px;color:#111;letter-spacing:0.25px;">Вектор1</div>
<div class="t" style="left:1174px;top:649px;font-size:10px;color:#111;font-weight:bold;transform:scaleX(0.92);transform-origin:0 0;">Обычный</div>
<div class="t" style="left:1174px;top:660px;font-size:10px;color:#111;font-weight:bold;transform:scaleX(0.92);transform-origin:0 0;">100%</div>
<div class="a" style="left:1111px;top:675px;width:143px;height:40px;background:#fff;border-radius:2px;"></div>
<div class="a" style="left:1115px;top:678px;width:19px;height:16px;background:#fff;border:1px solid #8a8a8a;"></div>
<svg class="a" style="left:1116px;top:680px;" width="18" height="13" viewBox="0 0 18 13"><g transform="translate(1 1)"><path d="M0.3 3.3 Q6 0 14.6 0.5" stroke="#777" stroke-width="0.9" fill="none"/><path d="M0.4 6.8 Q7 1.6 14 4.3" stroke="#000" stroke-width="1.7" fill="none"/><path d="M9 3.2 L14.8 4.3 L9.5 5.4 Z" fill="#000"/><circle cx="7.8" cy="6" r="2.9" fill="#000"/><circle cx="6.3" cy="5.1" r="0.95" fill="#fff"/><path d="M2.3 8.7 Q8 9.7 13.3 6.5" stroke="#444" stroke-width="1" stroke-dasharray="0.8,0.9" fill="none"/></g></svg>
<div class="a" style="left:1115px;top:696px;width:19px;height:16px;background:#fff;border:1px solid #8a8a8a;"></div>
<div class="a" style="left:1137px;top:678px;width:34px;height:34px;background:#fff;border:1px solid #8a8a8a;"></div>
<div class="t" style="left:1174px;top:679px;font-size:12px;color:#111;letter-spacing:0.3px;">Слой1</div>
<div class="t" style="left:1174px;top:691px;font-size:10px;color:#111;font-weight:bold;transform:scaleX(0.92);transform-origin:0 0;">Обычный</div>
<div class="t" style="left:1174px;top:702px;font-size:10px;color:#111;font-weight:bold;transform:scaleX(0.92);transform-origin:0 0;">100%</div>
<div class="a" style="left:1258px;top:631px;width:17px;height:313px;background:#f0f0f0;"></div>
<div class="a" style="left:1260px;top:632px;width:14px;height:14px;background:#d8d8d8;border:1px solid #d0d0d0;border-radius:2px;"></div>
<div class="a" style="left:1266px;top:637px;width:1px;height:1px;background:#fff;"></div>
<div class="a" style="left:1265px;top:638px;width:3px;height:1px;background:#fff;"></div>
<div class="a" style="left:1264px;top:639px;width:5px;height:1px;background:#fff;"></div>
<div class="a" style="left:1259px;top:928px;width:15px;height:15px;background:#d8d8d8;border:1px solid #c8c8c8;border-radius:2px;"></div>
<div class="a" style="left:1264px;top:934px;width:5px;height:1px;background:#fff;"></div>
<div class="a" style="left:1265px;top:935px;width:3px;height:1px;background:#fff;"></div>
<div class="a" style="left:1266px;top:936px;width:1px;height:1px;background:#fff;"></div>
<div class="a" style="left:1106px;top:943px;width:152px;height:17px;background:#ececec;"></div>
<div class="a" style="left:1106px;top:944px;width:15px;height:15px;background:#d8d8d8;border:1px solid #c8c8c8;border-radius:2px;"></div>
<svg class="a" style="left:1112.0px;top:948.5px;" width="3.5" height="6" viewBox="0 0 3.5 6"><path d="M3.0 0 L3.0 6 L0 3.0 Z" fill="#fff"/></svg>
<div class="a" style="left:1243px;top:944px;width:15px;height:15px;background:#d8d8d8;border:1px solid #c8c8c8;border-radius:2px;"></div>
<svg class="a" style="left:1249.0px;top:948.5px;" width="3.5" height="6" viewBox="0 0 3.5 6"><path d="M0 0 L0 6 L3.0 3.0 Z" fill="#fff"/></svg>
<div class="t" style="left:841px;top:976px;font-size:12px;color:#111;">Памяти занято</div>
<div class="a" style="left:929px;top:970px;width:124px;height:21px;background:#f8f8f8;border:1px solid #a8a8a8;border-radius:2px;"></div>
<div class="a" style="left:931px;top:972px;width:8px;height:17px;background:#44d39a;"></div>
<div class="a" style="left:939px;top:972px;width:2px;height:17px;background:#6aa8c8;"></div>
<div class="t" style="left:933px;top:975px;font-size:12px;color:#111;letter-spacing:0.2px;">7% (9%)</div>
<div class="t" style="left:1060px;top:976px;font-size:12px;color:#111;letter-spacing:0.1px;">Место диска</div>
<div class="a" style="left:1136px;top:970px;width:124px;height:21px;background:#f8f8f8;border:1px solid #a8a8a8;border-radius:2px;"></div>
<div class="a" style="left:1138px;top:972px;width:30px;height:17px;background:#45b5f0;"></div>
<div class="t" style="left:1140px;top:975px;font-size:12px;color:#111;letter-spacing:0.3px;">26%</div></body></html>
